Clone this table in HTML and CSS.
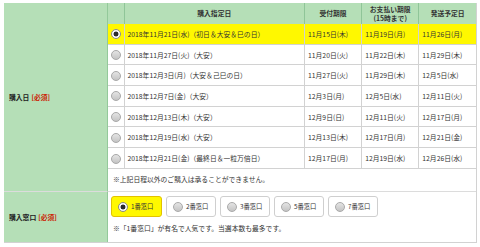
FILE: index.html
```html
<!DOCTYPE html>
<html lang="ja">
<head>
<meta charset="utf-8">
<link rel="stylesheet" href="styles.css">
</head>
<body>
<div class="form">
  <div class="label sec1">購入日 <span class="req">[必須]</span></div>
  <div class="content sec1">
    <table class="dates">
      <colgroup>
        <col class="c-radio"><col class="c-date"><col class="c-s"><col class="c-s"><col class="c-s">
      </colgroup>
      <thead>
        <tr>
          <th></th>
          <th>購入指定日</th>
          <th>受付期限</th>
          <th>お支払い期限<br>(15時まで)</th>
          <th>発送予定日</th>
        </tr>
      </thead>
      <tbody>
        <tr class="sel">
          <td class="rc"><span class="radio on"></span></td>
          <td>2018年11月21日(水)（初日＆大安＆巳の日）</td>
          <td>11月15日(木)</td>
          <td>11月19日(月)</td>
          <td>11月26日(月)</td>
        </tr>
        <tr>
          <td class="rc"><span class="radio"></span></td>
          <td>2018年11月27日(火)（大安）</td>
          <td>11月20日(火)</td>
          <td>11月22日(木)</td>
          <td>11月29日(木)</td>
        </tr>
        <tr>
          <td class="rc"><span class="radio"></span></td>
          <td>2018年12月3日(月)（大安＆己巳の日）</td>
          <td>11月27日(火)</td>
          <td>11月29日(木)</td>
          <td>12月5日(水)</td>
        </tr>
        <tr>
          <td class="rc"><span class="radio"></span></td>
          <td>2018年12月7日(金)（大安）</td>
          <td>12月3日(月)</td>
          <td>12月5日(水)</td>
          <td>12月11日(火)</td>
        </tr>
        <tr>
          <td class="rc"><span class="radio"></span></td>
          <td>2018年12月13日(木)（大安）</td>
          <td>12月9日(日)</td>
          <td>12月11日(火)</td>
          <td>12月17日(月)</td>
        </tr>
        <tr>
          <td class="rc"><span class="radio"></span></td>
          <td>2018年12月19日(水)（大安）</td>
          <td>12月13日(木)</td>
          <td>12月17日(月)</td>
          <td>12月21日(金)</td>
        </tr>
        <tr>
          <td class="rc"><span class="radio"></span></td>
          <td>2018年12月21日(金)（最終日＆一粒万倍日）</td>
          <td>12月17日(月)</td>
          <td>12月19日(水)</td>
          <td>12月26日(水)</td>
        </tr>
      </tbody>
    </table>
    <p class="note1">※上記日程以外のご購入は承ることができません。</p>
  </div>

  <div class="label sec2">購入窓口 <span class="req">[必須]</span></div>
  <div class="content sec2 pad">
    <div class="windows">
      <span class="win on"><span class="radio on"></span>1番窓口</span>
      <span class="win"><span class="radio"></span>2番窓口</span>
      <span class="win"><span class="radio"></span>3番窓口</span>
      <span class="win"><span class="radio"></span>5番窓口</span>
      <span class="win"><span class="radio"></span>7番窓口</span>
    </div>
    <p class="note2">※「1番窓口」が有名で人気です。当選本数も最多です。</p>
  </div>
</div>
</body>
</html>
```

FILE: styles.css
```css
html, body { background: #fff; }
body {
  margin: 3px 0 0 4px;
  font-family: "Noto Sans CJK JP", "Noto Sans", sans-serif;
  font-size: 6.8px;
  color: #333;
}
.form {
  width: 473px;
  box-sizing: border-box;
  display: grid;
  grid-template-columns: 104px 1fr;
  border-right: 1px solid #d2d2d2;
  border-bottom: 1px solid #d2d2d2;
}
.label {
  background: #b5dfb7;
  display: flex;
  align-items: center;
  padding-left: 5px;
  font-weight: bold;
  color: #222;
  border-right: 1px solid #93c99a;
}
.req { color: #cc1a00; margin-left: 2px; }
.sec1 { height: 189px; box-sizing: border-box; border-bottom: 1px solid #dcdcdc; }
.sec2 { height: 50px; box-sizing: border-box; }
.content { min-width: 0; }
.pad { padding: 4px 0 0 3px; }

.dates {
  width: 100%;
  border-collapse: collapse;
  table-layout: fixed;
}
.c-radio { width: 16px; }
.c-date { width: 180px; }
.c-s { width: 57px; }
.dates th {
  background: #b5dfb7;
  height: 21px;
  padding: 0;
  font-weight: bold;
  color: #333;
  line-height: 1.25;
  text-align: center;
  border-left: 1px solid #8fc598;
}
.dates th:first-child { border-left: none; }
.dates td {
  height: 19.7px;
  padding: 0 0 0 3px;
  border-left: 1px solid #d2d2d2;
  border-bottom: 1px solid #d2d2d2;
  white-space: nowrap;
  overflow: hidden;
}
.dates td:first-child { border-left: none; }
.dates td.rc { padding: 0; text-align: center; }
.sel td { background: #fff800; }

.radio {
  display: inline-block;
  width: 8px;
  height: 8px;
  border-radius: 50%;
  border: 1px solid #a9a9a9;
  background: linear-gradient(#e4e4e4, #c4c4c4);
  vertical-align: middle;
}
.radio.on {
  border-color: #8a8a8a;
  background: radial-gradient(circle, #2b2b2b 0 2.1px, #fafafa 2.8px);
}

.note1 {
  margin: 0;
  padding: 0 0 0 5px;
  line-height: 20px;
}

.windows { display: flex; gap: 4px; }
.win {
  width: 50px;
  height: 21px;
  box-sizing: border-box;
  display: flex;
  align-items: center;
  gap: 3px;
  padding-left: 6px;
  border: 1px solid #cfcfcf;
  border-radius: 3px;
  background: #fff;
  font-size: 6.3px;
}
.win.on {
  background: #fff800;
  border-color: #e2c200;
  width: 51px;
}
.note2 {
  margin: 6px 0 0 2px;
  line-height: 10px;
}
```
